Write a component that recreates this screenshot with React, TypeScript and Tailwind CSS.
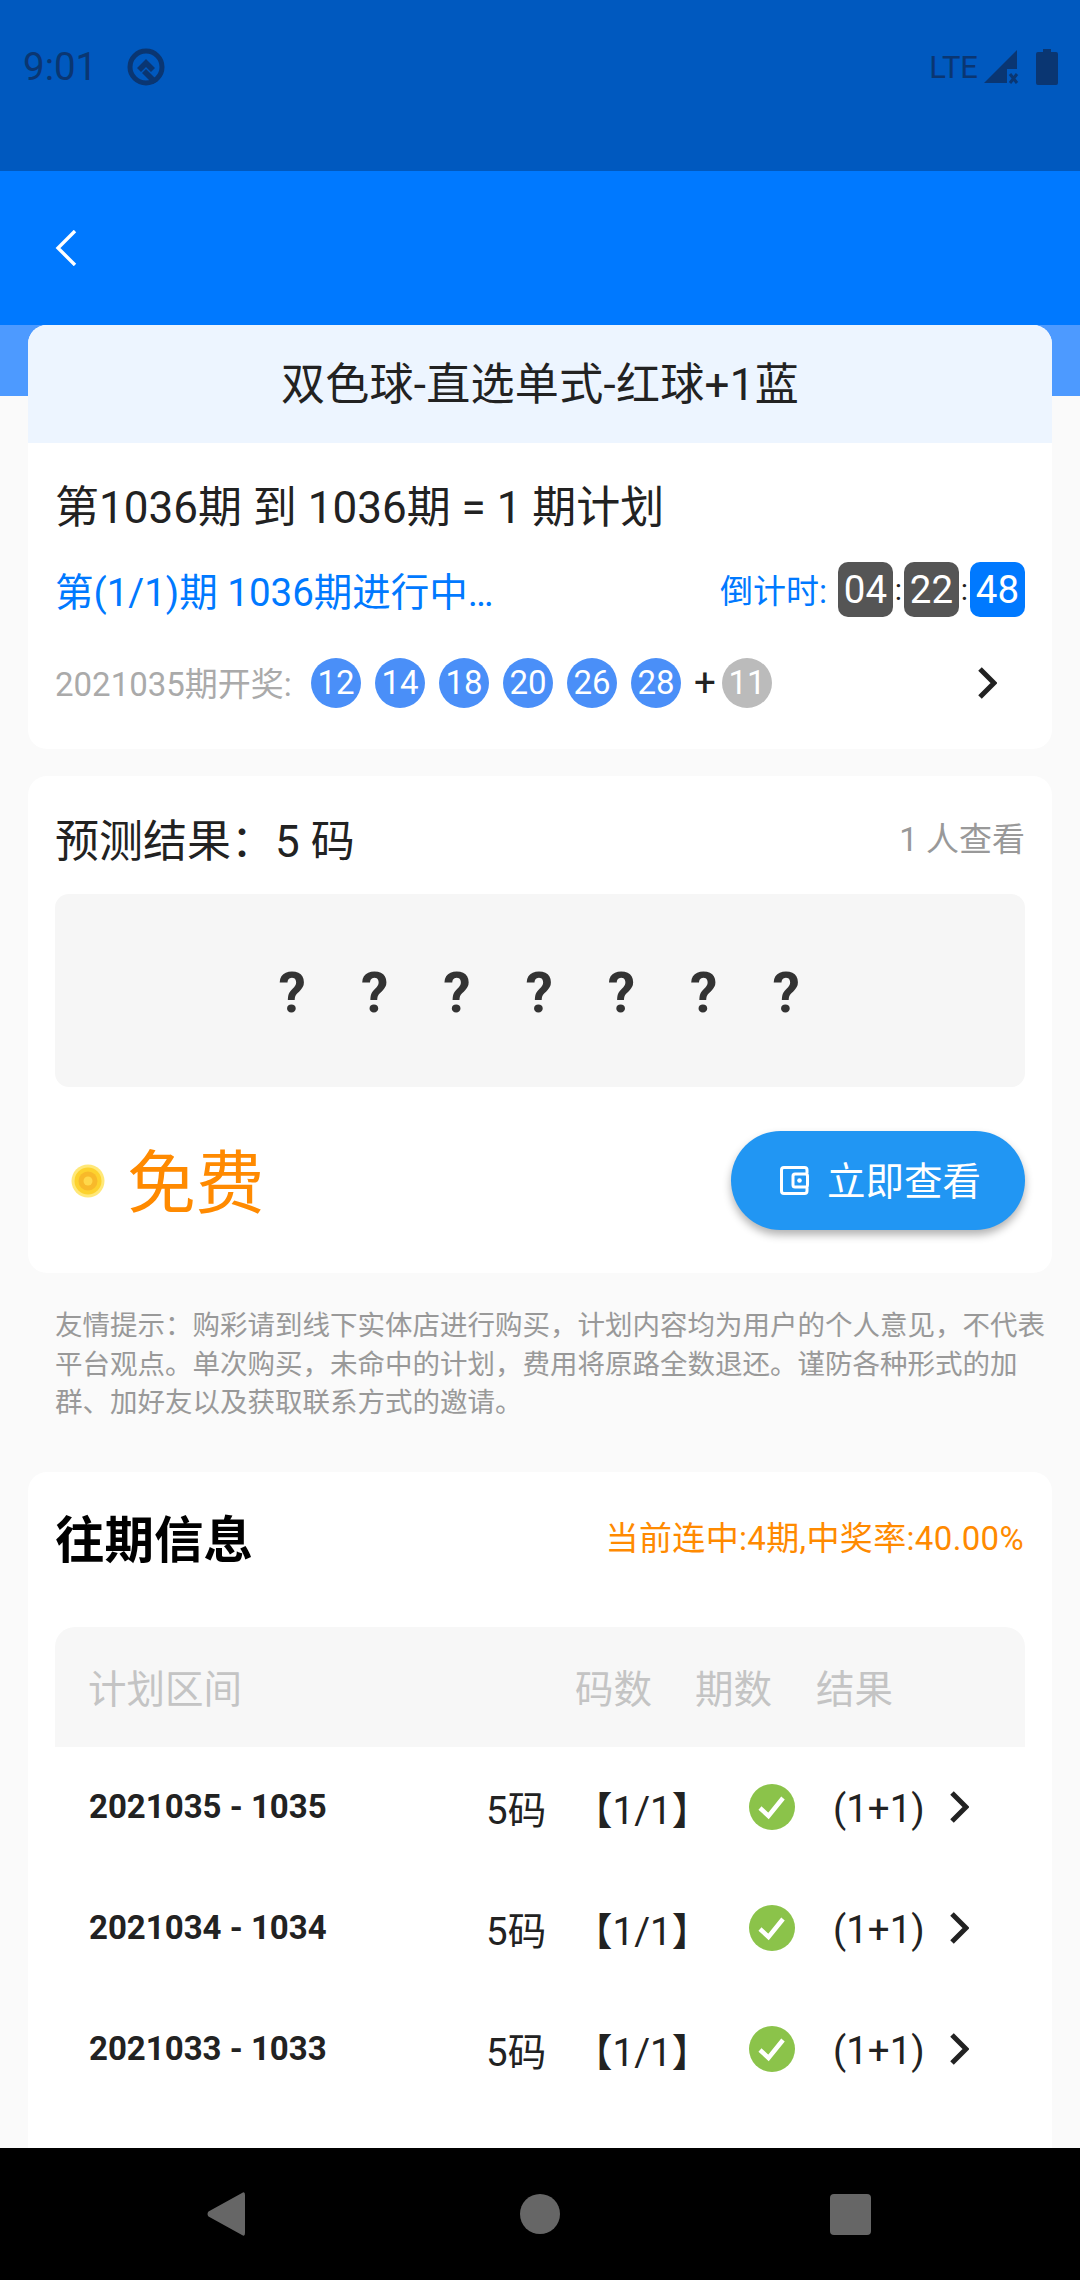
const balls = ['12', '14', '18', '20', '26', '28'];
const marks = ['?', '?', '?', '?', '?', '?', '?'];
const history = ['2021035 - 1035', '2021034 - 1034', '2021033 - 1033'];

// full-width punctuation, as the app shows it
const tips =
  '友情提示\uFF1A购彩请到线下实体店进行购买\uFF0C计划内容均为用户的个人意见\uFF0C不代表平台观点。单次购买\uFF0C未命中的计划\uFF0C费用将原路全数退还。谨防各种形式的加群、加好友以及获取联系方式的邀请。';

const Chevron = ({ className }: { className: string }) => (
  <svg viewBox="0 0 20 32" fill="none" className={className}>
    <path d="M3 2 L17 16 L3 30" stroke="currentColor" strokeWidth="5" />
  </svg>
);

const StatusBar = () => (
  <div className="h-[171px] shrink-0 bg-[#0059bf] text-[#0a3672]">
    <div className="flex h-[134px] items-center pl-[23px] pr-[22px]">
      <span className="text-[38.5px] leading-none">9:01</span>
      {/* q logo */}
      <svg viewBox="0 0 38 38" fill="none" className="ml-[30px] h-[38px] w-[38px]">
        <circle cx="19" cy="19" r="16" stroke="currentColor" strokeWidth="5" />
        <path d="M10 20 L19 11 L28 20 L24 24 L19 19 L14 24 Z" fill="currentColor" />
        <path d="M15 25 L19 21 L31 33 L26 36 Z" fill="currentColor" />
      </svg>
      <span className="ml-auto text-[31px] leading-none">LTE</span>
      <svg viewBox="0 0 36 36" fill="none" className="ml-[5px] h-[36px] w-[36px]">
        <path d="M1 34 L34 1 V20 H24 V34 Z" fill="currentColor" />
        <path d="M27 25 L34 34 M34 25 L27 34" stroke="currentColor" strokeWidth="3" />
      </svg>
      <svg viewBox="0 0 22 36" className="ml-[17px] h-[36px] w-[22px]">
        <path d="M7 0 H15 V3 H20 Q22 3 22 5 V34 Q22 36 20 36 H2 Q0 36 0 34 V5 Q0 3 2 3 H7 Z" fill="currentColor" />
      </svg>
    </div>
  </div>
);

const AppBar = () => (
  <div className="flex h-[154px] shrink-0 items-center bg-[#0079ff] pl-[55px]">
    <svg viewBox="0 0 22 36" fill="none" className="h-[36px] w-[22px]">
      <path d="M20 1 L3 18 L20 35" stroke="white" strokeWidth="3.4" />
    </svg>
  </div>
);

const PlanCard = () => (
  <div className="overflow-hidden rounded-[19px] bg-white">
    <div className="flex h-[118px] items-center justify-center bg-[#edf5ff] pt-[2px] text-[44px] tracking-[0.3px] text-[#222]">
      双色球-直选单式-红球+1蓝
    </div>
    <div className="px-[27px] pt-[37px] pb-[41px]">
      <div className="h-[56px] text-[44px] leading-[56px] text-[#222]">第1036期 到 1036期 = 1 期计划</div>
      <div className="mt-[26px] flex h-[55px] items-center">
        <span className="pt-[6px] text-[38.5px] text-[#0079ff]">第(1/1)期 1036期进行中…</span>
        <span className="ml-auto pt-[5px] text-[33px] text-[#0079ff]">倒计时:</span>
        <span className="ml-[11px] flex h-[55px] w-[55px] items-center justify-center rounded-[10px] bg-[#555] text-[38.5px] text-white">04</span>
        <span className="w-[11px] text-center text-[30px] text-[#222]">:</span>
        <span className="flex h-[55px] w-[55px] items-center justify-center rounded-[10px] bg-[#555] text-[38.5px] text-white">22</span>
        <span className="w-[11px] text-center text-[30px] text-[#222]">:</span>
        <span className="flex h-[55px] w-[55px] items-center justify-center rounded-[10px] bg-[#0079ff] text-[38.5px] text-white">48</span>
      </div>
      <div className="mt-[41px] flex h-[50px] items-center">
        <span className="w-[256px] pt-[4px] text-[33px] text-[#aaa]">2021035期开奖:</span>
        <div className="flex gap-[14px]">
          {balls.map((n) => (
            <span key={n} className="flex h-[50px] w-[50px] items-center justify-center rounded-full bg-[#4a8ff8] text-[33px] text-white">
              {n}
            </span>
          ))}
        </div>
        <span className="ml-[10px] w-[28px] text-center text-[38.5px] text-[#222]">+</span>
        <span className="ml-[3px] flex h-[50px] w-[50px] items-center justify-center rounded-full bg-[#bbb] text-[33px] text-white">11</span>
        <Chevron className="ml-auto mr-[28px] h-[32px] w-[20px] text-[#222]" />
      </div>
    </div>
  </div>
);

const ResultCard = () => (
  <div className="mt-[27px] rounded-[19px] bg-white px-[27px] pt-[40px] pb-[43px]">
    <div className="flex h-[46px] items-center justify-between">
      <span className="pt-[6px] text-[44px] text-[#222]">{'预测结果\uFF1A5 码'}</span>
      <span className="pt-[2px] text-[33px] text-[#999]">1 人查看</span>
    </div>
    <div className="mt-[32px] flex h-[193px] items-center justify-center gap-[56.3px] rounded-[14px] bg-[#f6f6f6] pt-[6px] pr-[3px]">
      {marks.map((m, i) => (
        <span key={i} className="w-[26px] text-center text-[55px] leading-none font-bold text-[#333]">
          {m}
        </span>
      ))}
    </div>
    <div className="mt-[44px] flex h-[99px] items-center">
      {/* coin */}
      <svg viewBox="0 0 34 34" className="ml-[16px] h-[34px] w-[34px]">
        <circle cx="17" cy="17" r="16.5" fill="#ffe878" />
        <circle cx="17" cy="17" r="13.5" fill="#fdd22e" />
        <circle cx="17" cy="17" r="9.5" fill="#f8b92a" />
        <circle cx="17" cy="17" r="4.5" fill="#ffd84a" />
      </svg>
      <span className="ml-[22px] pt-[10px] text-[68.75px] leading-none text-[#ff8a00]">免费</span>
      <button className="ml-auto flex h-[99px] w-[294px] items-center rounded-full bg-[#2196f3] pl-[49px] text-[38.5px] text-white shadow-[0_5px_9px_rgba(0,0,0,0.3)]">
        <svg viewBox="0 0 29 29" fill="none" className="mr-[18px] h-[29px] w-[29px]">
          <path d="M27 7.5 V4 Q27 1.5 24.5 1.5 H4 Q1.5 1.5 1.5 4 V25 Q1.5 27.5 4 27.5 H24.5 Q27 27.5 27 25 V21.5" stroke="white" strokeWidth="3" />
          <rect x="13" y="8" width="14.5" height="13" rx="2" stroke="white" strokeWidth="3" />
          <circle cx="19.5" cy="14.5" r="2.3" fill="white" />
        </svg>
        <span className="pt-[3px]">立即查看</span>
      </button>
    </div>
  </div>
);

const HistoryCard = () => (
  <div className="rounded-[19px] bg-white px-[27px] pt-[33px] pb-[60px]">
    <div className="flex h-[66px] items-center justify-between">
      <span className="pt-[8px] text-[49.5px] font-bold text-black">往期信息</span>
      <span className="pt-[3px] pr-[1px] text-[33px] tracking-[0.35px] text-[#ff8a00]">当前连中:4期,中奖率:40.00%</span>
    </div>
    <div className="mt-[56px] flex h-[120px] items-center rounded-t-[20px] bg-[#f7f7f7] pl-[33px] pt-[6px] text-[38.5px] text-[#c4c4c4]">
      <span className="w-[487px]">计划区间</span>
      <span className="w-[120px]">码数</span>
      <span className="w-[121px]">期数</span>
      <span>结果</span>
    </div>
    {history.map((range) => (
      <div key={range} className="flex h-[121px] items-center pl-[34px] text-[#222]">
        <span className="w-[397px] text-[33px] font-bold">{range}</span>
        <span className="w-[88px] pt-[8px] text-[38.5px]">5码</span>
        <span className="w-[175px] pt-[8px] text-[38.5px]">【1/1】</span>
        <svg viewBox="0 0 46 46" fill="none" className="h-[46px] w-[46px]">
          <circle cx="23" cy="23" r="23" fill="#8bc34a" />
          <path d="M11 24 L19.5 32 L34 14" stroke="white" strokeWidth="4.5" />
        </svg>
        <span className="ml-[38px] w-[116px] pt-[3px] text-[38.5px]">(1+1)</span>
        <Chevron className="h-[32px] w-[20px] text-[#222]" />
      </div>
    ))}
  </div>
);

const NavBar = () => (
  <div className="flex h-[132px] shrink-0 items-center bg-black">
    <svg viewBox="0 0 38 44" className="ml-[207px] h-[44px] w-[38px]">
      <path d="M38 3 V41 Q38 45 35 43 L1.500 24.500 Q-0.500 22 1.500 19.500 L35 1 Q38 -1 38 3 Z" fill="#666" />
    </svg>
    <span className="ml-[275px] h-[40px] w-[40px] rounded-full bg-[#666]" />
    <span className="ml-[270px] h-[41px] w-[41px] rounded-[4px] bg-[#666]" />
  </div>
);

export default function App() {
  return (
    <div className="flex h-[2280px] w-[1080px] flex-col overflow-hidden bg-[#fafafa] font-[Roboto,'Noto_Sans_CJK_SC',sans-serif]">
      <StatusBar />
      <AppBar />
      <div className="relative min-h-0 flex-1 overflow-hidden">
        <div className="absolute inset-x-0 top-0 h-[71px] bg-[#4d9aff]" />
        <div className="relative px-[28px]">
          <PlanCard />
          <ResultCard />
          <p className="mt-[34px] ml-[27px] text-[27.5px] leading-[38.5px] text-[#999]">{tips}</p>
          <div className="mt-[49px]">
            <HistoryCard />
          </div>
        </div>
      </div>
      <NavBar />
    </div>
  );
}
